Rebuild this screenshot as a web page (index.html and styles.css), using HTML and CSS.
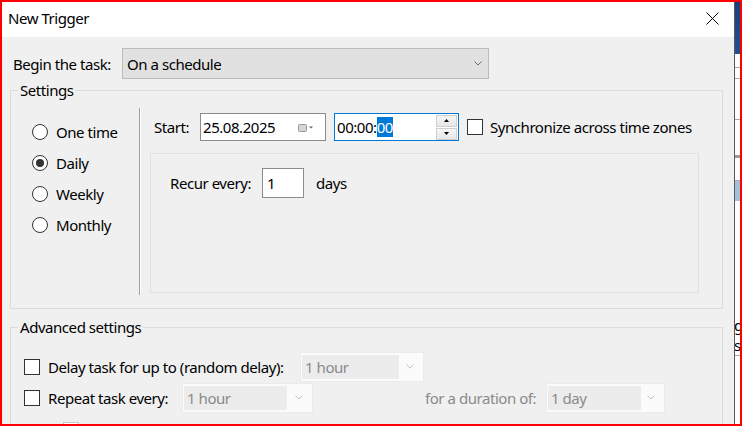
FILE: index.html
```html
<!DOCTYPE html>
<html>
<head>
<meta charset="utf-8">
<title>New Trigger</title>
<link rel="stylesheet" href="styles.css">
</head>
<body>
<div class="screen">
  <div class="dialog">
    <div class="titlebar">
      <span class="title">New Trigger</span>
      <svg class="close" width="13" height="13" viewBox="0 0 13 13"><path d="M0.5 0.5 L12.5 12.5 M12.5 0.5 L0.5 12.5" stroke="#000" stroke-width="1" fill="none"/></svg>
    </div>
    <div class="body">
      <div class="begin-row">
        <span class="begin-label">Begin the task:</span>
        <div class="combo">
          <span>On a schedule</span>
          <svg class="chev" width="8" height="5" viewBox="0 0 8 5"><path d="M0.5 0.5 L4 4 L7.5 0.5" stroke="#6b6b6b" fill="none"/></svg>
        </div>
      </div>

      <fieldset class="group settings">
        <legend>Settings</legend>
        <div class="settings-inner">
          <div class="radios">
            <div class="radio-row"><span class="radio"></span><span>One time</span></div>
            <div class="radio-row"><span class="radio checked"></span><span>Daily</span></div>
            <div class="radio-row"><span class="radio"></span><span>Weekly</span></div>
            <div class="radio-row"><span class="radio"></span><span>Monthly</span></div>
          </div>
          <div class="separator"></div>
          <div class="main">
            <div class="start-row">
              <span class="start-label">Start:</span>
              <div class="datebox">
                <span>25.08.2025</span>
                <svg class="cal" width="16" height="10" viewBox="0 0 16 10"><rect x="0.5" y="1.5" width="8" height="7" rx="1" fill="#d6d6d6" stroke="#9a9a9a"/><path d="M11 3.5 L15 3.5 L13 5.5 Z" fill="#606060"/></svg>
              </div>
              <div class="timebox">
                <span class="time-text">00:00:<span class="sel">00</span></span>
                <div class="spin">
                  <div class="spin-btn"><svg width="5" height="3" viewBox="0 0 5 3"><path d="M0 3 L2.5 0 L5 3 Z" fill="#000"/></svg></div>
                  <div class="spin-btn"><svg width="5" height="3" viewBox="0 0 5 3"><path d="M0 0 L5 0 L2.5 3 Z" fill="#000"/></svg></div>
                </div>
              </div>
              <span class="checkbox sync-check"></span>
              <span class="sync-label">Synchronize across time zones</span>
            </div>
            <div class="recur-panel">
              <div class="recur-row">
                <span class="recur-label">Recur every:</span>
                <div class="recur-input">1</div>
                <span class="days">days</span>
              </div>
            </div>
          </div>
        </div>
      </fieldset>

      <fieldset class="group advanced">
        <legend>Advanced settings</legend>
        <div class="adv-rows">
          <div class="adv-row">
            <span class="checkbox"></span>
            <span class="adv-label lbl-delay">Delay task for up to (random delay):</span>
            <div class="dcombo w-delay"><span class="dtext">1 hour</span><svg class="chev" width="8" height="5" viewBox="0 0 8 5"><path d="M0.5 0.5 L4 4 L7.5 0.5" stroke="#c4c4c4" fill="none"/></svg></div>
          </div>
          <div class="adv-row">
            <span class="checkbox"></span>
            <span class="adv-label lbl-repeat">Repeat task every:</span>
            <div class="dcombo w-repeat"><span class="dtext">1 hour</span><svg class="chev" width="8" height="5" viewBox="0 0 8 5"><path d="M0.5 0.5 L4 4 L7.5 0.5" stroke="#c4c4c4" fill="none"/></svg></div>
            <span class="duration-label">for a duration of:</span>
            <div class="dcombo w-duration"><span class="dtext">1 day</span><svg class="chev" width="8" height="5" viewBox="0 0 8 5"><path d="M0.5 0.5 L4 4 L7.5 0.5" stroke="#c4c4c4" fill="none"/></svg></div>
          </div>
          <div class="adv-row sub-row">
            <span class="checkbox disabled"></span>
            <span class="sub-label">Stop all running tasks at end of repetition duration</span>
          </div>
        </div>
      </fieldset>
    </div>
  </div>
  <div class="bgwin">
    <div class="bg-blue"></div>
    <div class="bg-cell h14"></div>
    <div class="bg-cell h11"></div>
    <div class="bg-cell h41"></div>
    <div class="bg-cell h38 thick"></div>
    <div class="bg-cell h23"></div>
    <div class="bg-sel"></div>
    <div class="bg-text">
      <span>g</span>
      <span>s</span>
    </div>
  </div>
</div>
</body>
</html>
```

FILE: styles.css
```css
* { box-sizing: border-box; }

html, body {
  margin: 0;
  padding: 0;
}

body {
  width: 742px;
  height: 426px;
  overflow: hidden;
  font-family: "Noto Sans", "Open Sans", sans-serif;
  font-size: 15px;
  line-height: 20px;
  letter-spacing: -0.45px;
  color: #000;
}

.screen {
  width: 742px;
  height: 426px;
  border: 2px solid #ff0000;
  display: flex;
  overflow: hidden;
  background: #fff;
}

.dialog {
  width: 732px;
  flex: none;
  display: flex;
  flex-direction: column;
  background: #f0f0f0;
  overflow: hidden;
}

.titlebar {
  height: 35px;
  flex: none;
  background: #fff;
  display: flex;
  align-items: flex-start;
  justify-content: space-between;
  padding: 6px 15px 0 6px;
}

.title {
  line-height: 20px;
}

.close {
  margin-top: 4px;
}

.body {
  padding: 0 11px 0 8px;
  flex: 1;
}

.begin-row {
  display: flex;
  align-items: center;
  margin-top: 11px;
  padding-left: 3px;
}

.begin-label {
  width: 109px;
}

.combo {
  width: 367px;
  height: 31px;
  background: #e1e1e1;
  border: 1px solid #bcbcbc;
  display: flex;
  align-items: center;
  justify-content: space-between;
  padding: 0 6px 0 4px;
}

.group {
  margin: 0;
  padding: 0;
  border: 1px solid #dcdcdc;
  min-width: 0;
}

.group legend {
  margin-left: 7px;
  padding: 0 2px;
  line-height: 20px;
}

.settings {
  margin-top: 1px;
}

.settings-inner {
  display: flex;
  padding: 8px 0 13px 0;
}

.radios {
  width: 128px;
  padding: 8px 0 0 21px;
}

.radio-row {
  height: 31px;
  display: flex;
  align-items: center;
  gap: 8px;
}

.radio {
  width: 16px;
  height: 16px;
  border: 1px solid #333;
  border-radius: 50%;
  background: #fff;
  display: flex;
  align-items: center;
  justify-content: center;
  flex: none;
}

.radio.checked::after {
  content: "";
  width: 8px;
  height: 8px;
  border-radius: 50%;
  background: #333;
}

.separator {
  width: 2px;
  height: 187px;
  border-left: 1px solid #a0a0a0;
  border-right: 1px solid #fff;
}

.main {
  padding: 5px 0 0 13px;
}

.start-row {
  display: flex;
  align-items: center;
  height: 28px;
}

.start-label {
  width: 46px;
}

.datebox {
  width: 126px;
  height: 28px;
  background: #fff;
  border: 1px solid #8c8c8c;
  display: flex;
  align-items: center;
  justify-content: space-between;
  padding: 0 11px 0 2px;
}

.cal {
  margin-top: 1px;
}

.timebox {
  width: 125px;
  height: 28px;
  margin-left: 8px;
  background: #fff;
  border: 1px solid #0078d7;
  display: flex;
  align-items: center;
  justify-content: space-between;
  padding: 0 1px 0 2px;
}

.sel {
  background: #0078d7;
  color: #fff;
}

.spin {
  display: flex;
  flex-direction: column;
  gap: 1px;
}

.spin-btn {
  width: 21px;
  height: 12px;
  background: linear-gradient(#f6f6f6, #e6e6e6);
  border: 1px solid #cfcfcf;
  display: flex;
  align-items: center;
  justify-content: center;
}

.checkbox {
  width: 16px;
  height: 16px;
  border: 1px solid #333;
  background: #fff;
  flex: none;
}

.checkbox.disabled {
  border-color: #c8c8c8;
}

.sync-check {
  margin-left: 8px;
}

.sync-label {
  margin-left: 7px;
  white-space: nowrap;
}

.recur-panel {
  width: 549px;
  height: 140px;
  margin: 12px 0 0 -4px;
  border: 1px solid #e0e0e0;
  padding: 14px 0 0 19px;
}

.recur-row {
  display: flex;
  align-items: center;
}

.recur-label {
  width: 92px;
}

.recur-input {
  width: 42px;
  height: 30px;
  background: #fff;
  border: 1px solid #8c8c8c;
  padding: 4px 0 0 4px;
}

.days {
  margin-left: 12px;
}

.advanced {
  margin-top: 8px;
}

.adv-rows {
  padding: 14px 0 0 13px;
}

.adv-row {
  display: flex;
  align-items: center;
  height: 31px;
  white-space: nowrap;
}

.adv-label {
  margin-left: 8px;
  flex: none;
}

.lbl-delay { width: 252px; }
.lbl-repeat { width: 134px; }

.dcombo {
  height: 30px;
  background: #fbfbfb;
  border: 1px solid #ebebeb;
  display: flex;
  align-items: center;
  justify-content: space-between;
  padding: 2px 9px 2px 1px;
  flex: none;
}

.dtext {
  align-self: stretch;
  background: #ececec;
  color: #8a8a8a;
  display: flex;
  align-items: center;
  padding-left: 3px;
}

.w-delay { width: 124px; }
.w-delay .dtext { width: 97px; }
.w-repeat { width: 131px; }
.w-repeat .dtext { width: 103px; }
.w-duration { width: 119px; }
.w-duration .dtext { width: 93px; }

.duration-label {
  margin-left: 112px;
  width: 121px;
  color: #8a8a8a;
}

.sub-row {
  padding-left: 39px;
  align-items: flex-start;
  padding-top: 9px;
}

.sub-label {
  margin-left: 9px;
  color: #9a9a9a;
  margin-top: -2px;
}

.bgwin {
  flex: 1;
  border-left: 1px solid #5a5a5a;
  background: #fff;
  display: flex;
  flex-direction: column;
  overflow: hidden;
}

.bg-blue {
  height: 52px;
  flex: none;
  background: linear-gradient(#1b3f7d, #23508f);
}

.bg-cell {
  flex: none;
  border-bottom: 1px solid #a8a8a8;
}

.h14 { height: 14px; }
.h11 { height: 11px; }
.h41 { height: 41px; }
.h38 { height: 38px; }
.thick { border-bottom: 3px solid #9a9a9a; }
.h23 { height: 23px; }

.bg-sel {
  height: 20px;
  flex: none;
  background: #a9c0dd;
}

.bg-text {
  margin-top: 114px;
  display: flex;
  flex-direction: column;
  font-size: 15px;
  line-height: 20px;
  margin-left: -1px;
  border-bottom: 1px solid #a8a8a8;
}
```
